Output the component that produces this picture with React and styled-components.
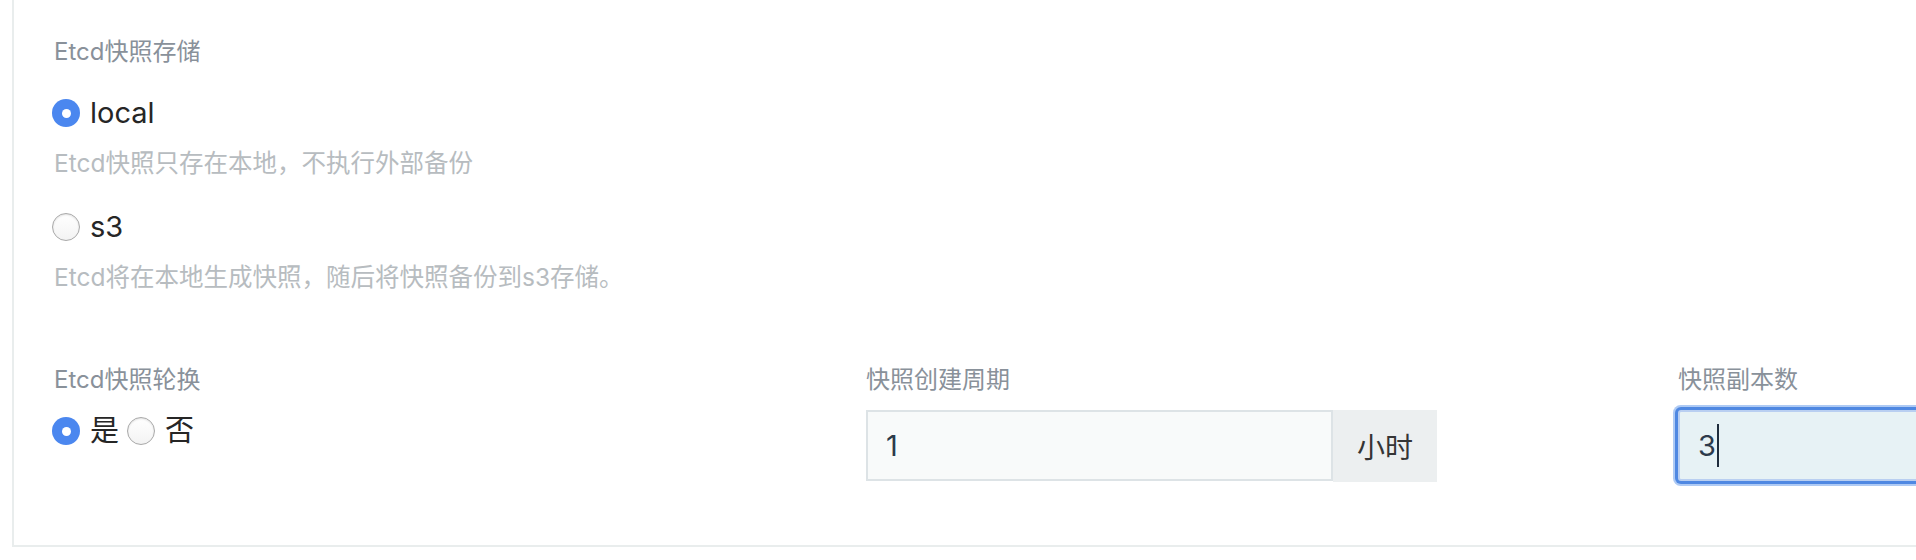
import React from "react"
import styled, { createGlobalStyle } from "styled-components"

const GlobalStyle = createGlobalStyle`
  body {
    margin: 0;
    background: #ffffff;
    overflow: hidden;
    font-family: Inter, "Noto Sans CJK SC", sans-serif;
  }
`

const Panel = styled.div`
  margin-left: 12px;
  width: 2600px;
  padding: 37px 0 63px 40px;
  border-left: 2px solid #e9eded;
  border-bottom: 2px solid #e9eded;
  box-sizing: border-box;
`

const FieldLabel = styled.div`
  font-size: 24px;
  line-height: 30px;
  height: 30px;
  color: #89919a;
  white-space: nowrap;
`

const RadioRow = styled.label`
  display: flex;
  align-items: center;
  height: 36px;
  margin-top: ${(p) => p.$top || 0}px;
  font-size: 29px;
  color: #262626;
`

const InlineRadios = styled.div`
  display: flex;
  align-items: center;
  height: 36px;
  margin-top: 18px;
  font-size: 29px;
  color: #262626;
`

const RadioDot = styled.span`
  flex: none;
  width: 28px;
  height: 28px;
  border-radius: 50%;
  box-sizing: border-box;
  margin: 0 10px 0 -2px;
  display: flex;
  align-items: center;
  justify-content: center;
  background: ${(p) => (p.$checked ? "#4b87ef" : "linear-gradient(#ffffff, #f3f3f3)")};
  border: ${(p) => (p.$checked ? "none" : "1.5px solid #a9a9a9")};
  box-shadow: ${(p) => (p.$checked ? "none" : "inset 0 1px 2px rgba(0, 0, 0, 0.12)")};
  &::after {
    content: "";
    display: ${(p) => (p.$checked ? "block" : "none")};
    width: 9px;
    height: 9px;
    border-radius: 50%;
    background: #ffffff;
  }
`

const RadioText = styled.span`
  line-height: 36px;
  margin-right: ${(p) => p.$gap || 0}px;
`

const Help = styled.div`
  font-size: 24.5px;
  line-height: 30px;
  margin-top: 17px;
  color: #b7bcc0;
  white-space: nowrap;
`

const Grid = styled.div`
  display: grid;
  grid-template-columns: 571px 571px 571px;
  column-gap: 241px;
  margin-top: 73px;
`

const InputGroup = styled.div`
  display: flex;
  margin-top: 15px;
  height: 72px;
`

const Field = styled.div`
  flex: 1;
  display: flex;
  align-items: center;
  box-sizing: border-box;
  height: 71px;
  padding-left: 18px;
  font-size: 29px;
  color: #2c3a4b;
  background: ${(p) => (p.$focused ? "#e7f2f5" : "#f8fafa")};
  border: 2px solid ${(p) => (p.$focused ? "#b9cff1" : "#dde3e6")};
  border-radius: ${(p) => (p.$focused ? "3px" : "0")};
  box-shadow: ${(p) => (p.$focused ? "0 0 0 3px #4f88e2, 0 0 0 5px #aecaf4" : "none")};
`

const Caret = styled.span`
  display: inline-block;
  width: 2px;
  height: 43px;
  margin-left: 1px;
  background: #1f2d3d;
`

const Addon = styled.div`
  flex: none;
  width: 104px;
  height: 72px;
  display: flex;
  align-items: center;
  justify-content: center;
  font-size: 28px;
  color: #353535;
  background: #eceff0;
`

const Column = styled.div`
  display: flex;
  flex-direction: column;
`

const App = () => {
  return (
    <>
      <GlobalStyle />
      <Panel>
        <FieldLabel>Etcd快照存储</FieldLabel>
        <RadioRow $top={28}>
          <RadioDot $checked />
          <RadioText>local</RadioText>
        </RadioRow>
        <Help>Etcd快照只存在本地，不执行外部备份</Help>
        <RadioRow $top={31}>
          <RadioDot />
          <RadioText>s3</RadioText>
        </RadioRow>
        <Help>Etcd将在本地生成快照，随后将快照备份到s3存储。</Help>

        <Grid>
          <Column>
            <FieldLabel>Etcd快照轮换</FieldLabel>
            <InlineRadios>
              <RadioDot $checked />
              <RadioText $gap={10}>是</RadioText>
              <RadioDot />
              <RadioText>否</RadioText>
            </InlineRadios>
          </Column>
          <Column>
            <FieldLabel>快照创建周期</FieldLabel>
            <InputGroup>
              <Field>1</Field>
              <Addon>小时</Addon>
            </InputGroup>
          </Column>
          <Column>
            <FieldLabel>快照副本数</FieldLabel>
            <InputGroup>
              <Field $focused>
                3<Caret />
              </Field>
            </InputGroup>
          </Column>
        </Grid>
      </Panel>
    </>
  )
}

export default App
